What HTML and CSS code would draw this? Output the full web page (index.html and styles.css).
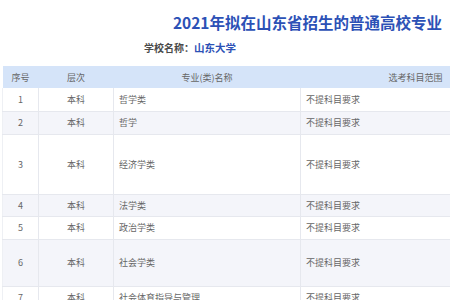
FILE: index.html
```
<!DOCTYPE html>
<html lang="zh">
<head>
<meta charset="utf-8">
<link rel="stylesheet" href="styles.css">
</head>
<body>
<div class="page">
  <h1 class="title">2021年拟在山东省招生的普通高校专业</h1>
  <p class="school"><span class="label">学校名称：</span><span class="name">山东大学</span></p>
  <table class="majors">
    <colgroup>
      <col class="c-no"><col class="c-level"><col class="c-major"><col class="c-req">
    </colgroup>
    <thead>
      <tr><th>序号</th><th>层次</th><th>专业(类)名称</th><th class="th-req">选考科目范围</th></tr>
    </thead>
    <tbody>
      <tr class="h23"><td class="ctr">1</td><td class="ctr">本科</td><td>哲学类</td><td>不提科目要求</td></tr>
      <tr class="h23 alt"><td class="ctr">2</td><td class="ctr">本科</td><td>哲学</td><td>不提科目要求</td></tr>
      <tr class="h60"><td class="ctr">3</td><td class="ctr">本科</td><td>经济学类</td><td>不提科目要求</td></tr>
      <tr class="h22 alt"><td class="ctr">4</td><td class="ctr">本科</td><td>法学类</td><td>不提科目要求</td></tr>
      <tr class="h23"><td class="ctr">5</td><td class="ctr">本科</td><td>政治学类</td><td>不提科目要求</td></tr>
      <tr class="h47 alt"><td class="ctr">6</td><td class="ctr">本科</td><td>社会学类</td><td>不提科目要求</td></tr>
      <tr class="h23"><td class="ctr">7</td><td class="ctr">本科</td><td>社会体育指导与管理</td><td>不提科目要求</td></tr>
    </tbody>
  </table>
</div>
</body>
</html>
```
FILE: styles.css
```
html, body {
  margin: 0;
  padding: 0;
  background: #ffffff;
  overflow: hidden;
}
body {
  font-family: "Noto Sans CJK SC", "Noto Sans", sans-serif;
  color: #666;
}
.page {
  width: 450px;
}
.title {
  margin: 10px 0 0 0;
  padding-right: 8px;
  text-align: right;
  font-size: 15.5px;
  line-height: 24px;
  font-weight: 700;
  color: #2c51b6;
}
.school {
  margin: 6px 0 0 0;
  padding-left: 144px;
  font-size: 10px;
  line-height: 16px;
  font-weight: 700;
}
.school .label {
  color: #4a4a4a;
}
.school .name {
  color: #2c51b6;
  font-size: 10.5px;
}
.majors {
  margin: 10px 0 0 2px;
  width: 448px;
  table-layout: fixed;
  border-collapse: collapse;
  font-size: 9px;
  color: #666;
}
.c-no { width: 36px; }
.c-level { width: 75px; }
.c-major { width: 187px; }
.c-req { width: 150px; }
.majors th {
  height: 22px;
  padding: 0;
  background: #d5e4f9;
  font-weight: 400;
  text-align: center;
  color: #666;
}
.majors th.th-req {
  text-align: right;
  padding-right: 8px;
}
.majors td {
  padding: 0 0 0 5px;
  border: 1px solid #e6e8ee;
  border-top: none;
  vertical-align: middle;
  white-space: nowrap;
}
.majors td:first-child {
  border-left: 1px solid #eef0f4;
}
.majors td:last-child {
  border-right: none;
}
.majors td.ctr {
  text-align: center;
  padding: 0;
}
.majors tr.alt td {
  background: #f4f5fa;
}
.h22 { height: 22px; }
.h23 { height: 23px; }
.h47 { height: 47px; }
.h60 { height: 60px; }
```
